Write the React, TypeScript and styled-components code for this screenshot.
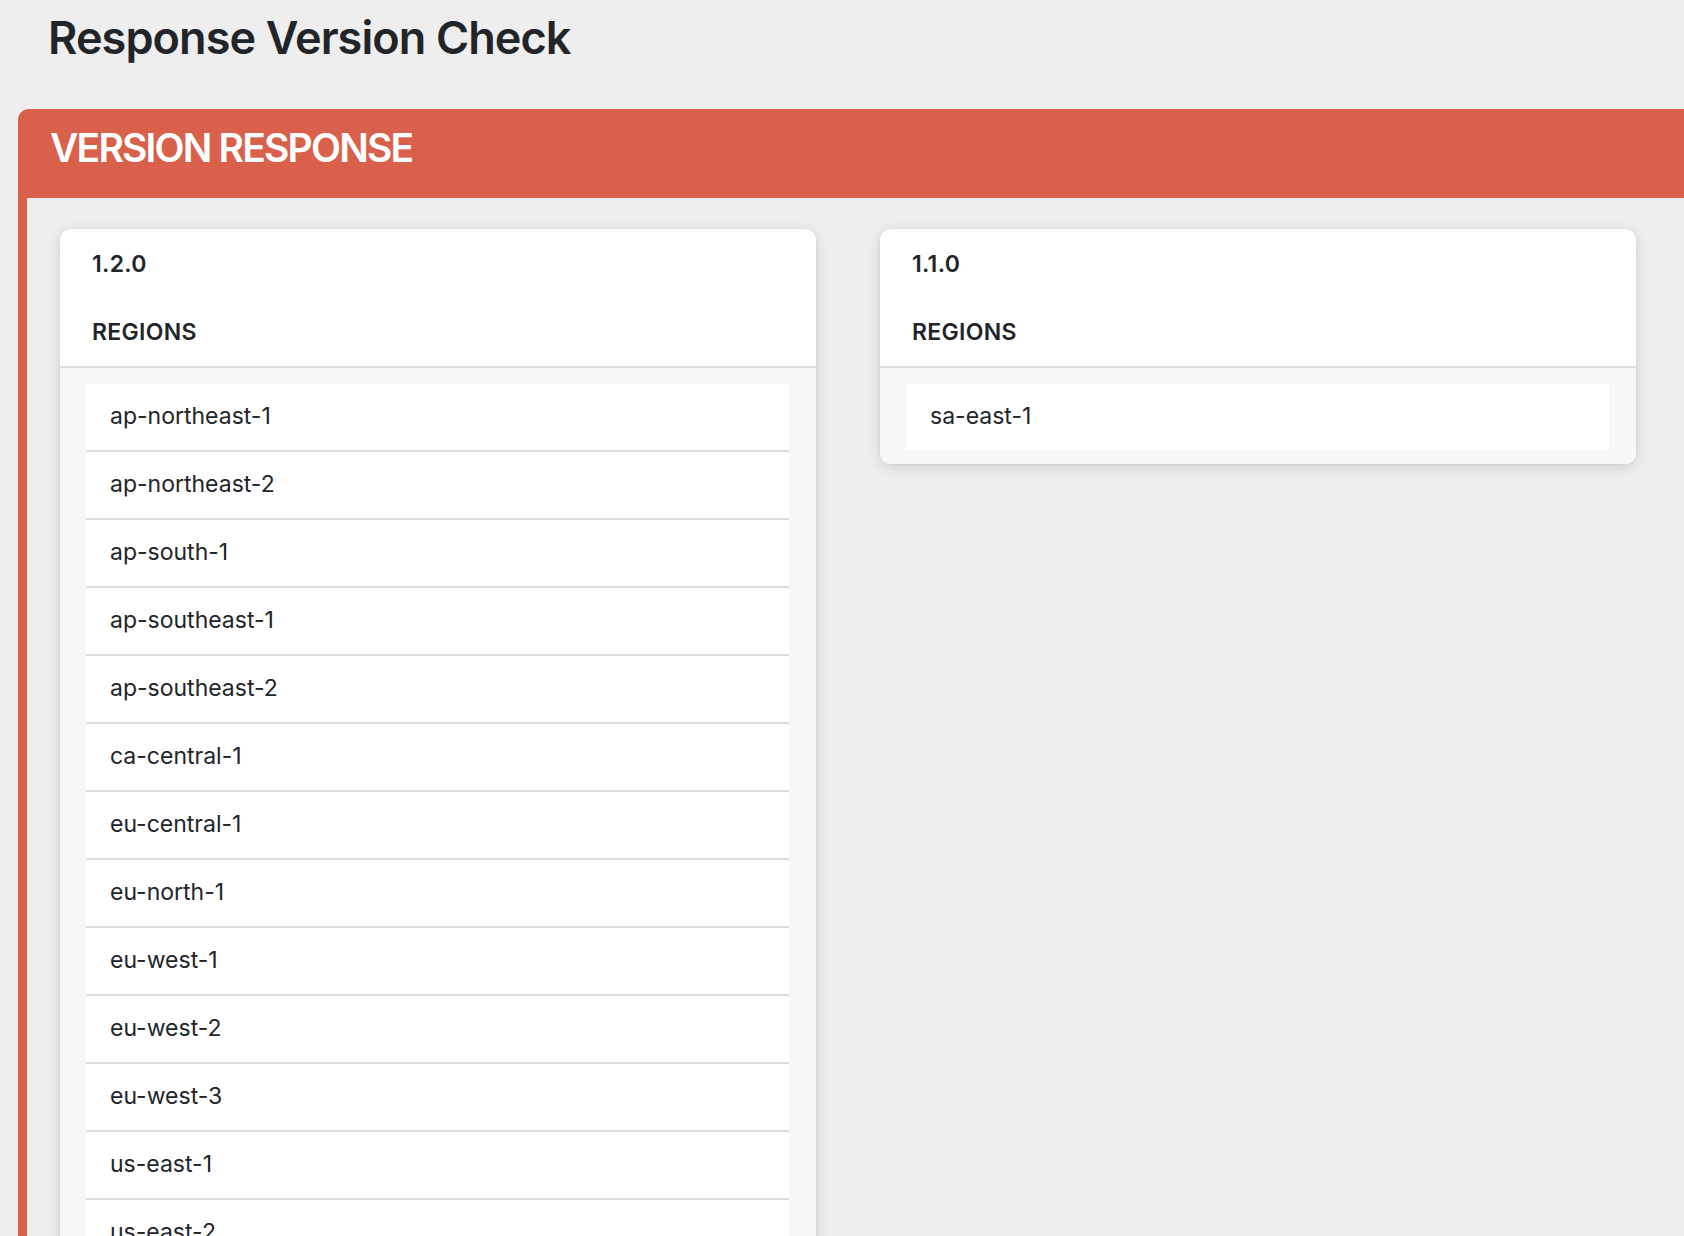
import React from 'react'
import styled, { createGlobalStyle } from 'styled-components'

const colors = {
  page: '#eeeeee',
  accent: '#d9604a',
  text: '#212529',
  divider: '#dcdcdc',
  listBackground: '#f7f7f7',
  white: '#ffffff'
}

const GlobalStyle = createGlobalStyle`
  html, body {
    margin: 0;
    padding: 0;
    background: ${colors.page};
    font-family: Inter, "Noto Sans", "Liberation Sans", sans-serif;
    color: ${colors.text};
    overflow: hidden;
  }
`

const Page = styled.div`
  padding-left: 18px;
  width: 1720px;
`

const Title = styled.h1`
  margin: 11px 0 44px 30px;
  font-size: 45px;
  line-height: 54px;
  font-weight: 600;
  letter-spacing: -0.9px;
`

const PanelHeader = styled.div`
  height: 89px;
  box-sizing: border-box;
  padding: 15px 0 0 32px;
  background: ${colors.accent};
  border-top-left-radius: 11px;

  h2 {
    margin: 0;
    color: ${colors.white};
    font-size: 39px;
    line-height: 48px;
    font-weight: 600;
    letter-spacing: -1.8px;
  }
`

const PanelBody = styled.div`
  border-left: 9px solid ${colors.accent};
  padding: 31px 0 40px 33px;
  display: grid;
  grid-template-columns: 756px 756px;
  column-gap: 64px;
  align-items: start;
`

const Card = styled.div`
  background: ${colors.white};
  border-radius: 11px;
  overflow: hidden;
  box-shadow: 0 3px 14px rgba(0, 0, 0, 0.13), 0 0 2px rgba(0, 0, 0, 0.08);
`

const CardHeader = styled.div`
  padding: 19px 32px 17px;
  border-bottom: 2px solid ${colors.divider};
`

const HeaderLine = styled.div<{ $spaced?: boolean }>`
  font-size: 23px;
  line-height: 33px;
  font-weight: 600;
  letter-spacing: 0.3px;
  margin-bottom: ${({ $spaced }) => ($spaced ? '35px' : '0')};
`

const RegionList = styled.ul`
  list-style: none;
  margin: 0;
  padding: 16px 27px 14px 26px;
  background: ${colors.listBackground};
`

const RegionItem = styled.li`
  background: ${colors.white};
  height: 64px;
  line-height: 64px;
  padding: 0 24px 2px;
  font-size: 23px;
  font-weight: 400;
  border-bottom: 2px solid ${colors.divider};

  &:last-child {
    border-bottom: none;
  }
`

const versions = [
  {
    version: '1.2.0',
    regions: [
      'ap-northeast-1',
      'ap-northeast-2',
      'ap-south-1',
      'ap-southeast-1',
      'ap-southeast-2',
      'ca-central-1',
      'eu-central-1',
      'eu-north-1',
      'eu-west-1',
      'eu-west-2',
      'eu-west-3',
      'us-east-1',
      'us-east-2',
      'us-west-1',
      'us-west-2'
    ]
  },
  {
    version: '1.1.0',
    regions: ['sa-east-1']
  }
]

export default function App() {
  return (
    <>
      <GlobalStyle />
      <Page>
        <Title>Response Version Check</Title>
        <PanelHeader>
          <h2>VERSION RESPONSE</h2>
        </PanelHeader>
        <PanelBody>
          {versions.map((entry) => (
            <Card key={entry.version}>
              <CardHeader>
                <HeaderLine $spaced>{entry.version}</HeaderLine>
                <HeaderLine>REGIONS</HeaderLine>
              </CardHeader>
              <RegionList>
                {entry.regions.map((region) => (
                  <RegionItem key={region}>{region}</RegionItem>
                ))}
              </RegionList>
            </Card>
          ))}
        </PanelBody>
      </Page>
    </>
  )
}
